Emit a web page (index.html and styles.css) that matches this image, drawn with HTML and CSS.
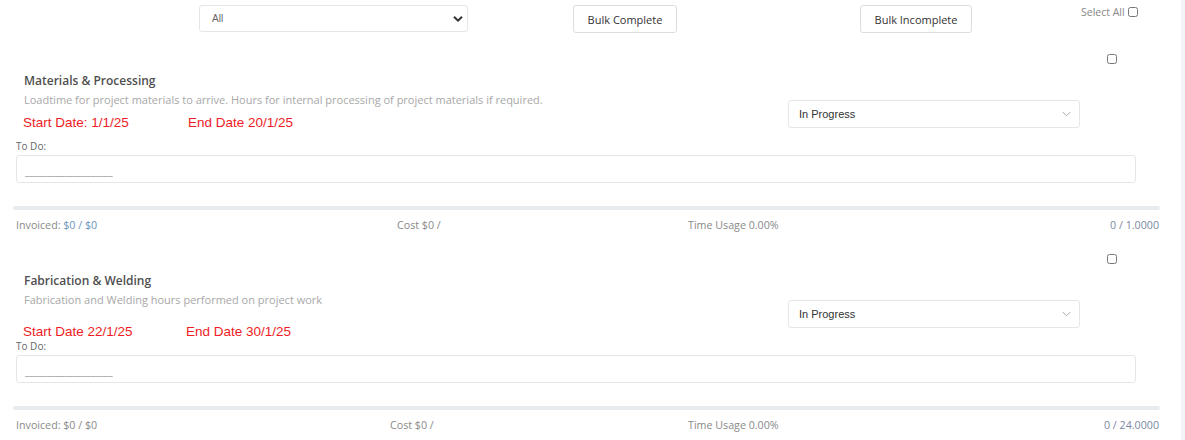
FILE: index.html
```html
<!DOCTYPE html>
<html lang="en">
<head>
    <meta charset="UTF-8">
    <meta name="viewport" content="width=device-width, initial-scale=1.0">
    <title>Project Tasks</title>
    <link rel="stylesheet" href="styles.css">
</head>
<body>

<div class="page">
    <div class="toolbar">
        <div class="select-wrap filter">
            <select class="filter-select">
                <option>All</option>
                <option>Complete</option>
                <option>Incomplete</option>
            </select>
            <svg class="chev chev-bold" width="10" height="7" viewBox="0 0 10 7"><path d="M1 1.2 L5 5.2 L9 1.2" fill="none" stroke="#333" stroke-width="2"/></svg>
        </div>
        <button class="btn btn-complete">Bulk Complete</button>
        <button class="btn btn-incomplete">Bulk Incomplete</button>
        <label class="select-all">Select All <input type="checkbox" class="check"></label>
    </div>

    <div class="task">
        <div class="task-body">
            <div class="check-row"><input type="checkbox" class="check"></div>
            <div class="task-head">
                <div class="task-info">
                    <h3 class="task-title">Materials &amp; Processing</h3>
                    <p class="task-desc">Loadtime for project materials to arrive. Hours for internal processing of project materials if required.</p>
                    <div class="dates">
                        <span class="start">Start Date: 1/1/25</span>
                        <span>End Date 20/1/25</span>
                    </div>
                </div>
                <div class="select-wrap status">
                    <select class="status-select">
                        <option>In Progress</option>
                        <option>Complete</option>
                    </select>
                    <svg class="chev" width="9" height="6" viewBox="0 0 9 6"><path d="M0.5 0.8 L4.5 4.8 L8.5 0.8" fill="none" stroke="#aaa" stroke-width="1"/></svg>
                </div>
            </div>
            <label class="todo-label">To Do:</label>
            <div class="todo-box">____________________</div>
        </div>
        <div class="bar"></div>
        <div class="task-foot">
            <span>Invoiced: <span class="blue">$0 / $0</span></span>
            <span class="cost">Cost $0 /</span>
            <span class="usage">Time Usage 0.00%</span>
            <span class="hours">0 / 1.0000</span>
        </div>
    </div>

    <div class="task">
        <div class="task-body">
            <div class="check-row"><input type="checkbox" class="check"></div>
            <div class="task-head">
                <div class="task-info">
                    <h3 class="task-title">Fabrication &amp; Welding</h3>
                    <p class="task-desc">Fabrication and Welding hours performed on project work</p>
                    <div class="dates dates-low">
                        <span class="start start-narrow">Start Date 22/1/25</span>
                        <span>End Date 30/1/25</span>
                    </div>
                </div>
                <div class="select-wrap status">
                    <select class="status-select">
                        <option>In Progress</option>
                        <option>Complete</option>
                    </select>
                    <svg class="chev" width="9" height="6" viewBox="0 0 9 6"><path d="M0.5 0.8 L4.5 4.8 L8.5 0.8" fill="none" stroke="#aaa" stroke-width="1"/></svg>
                </div>
            </div>
            <label class="todo-label">To Do:</label>
            <div class="todo-box">____________________</div>
        </div>
        <div class="bar"></div>
        <div class="task-foot">
            <span>Invoiced: $0 / $0</span>
            <span class="cost cost-shift">Cost $0 /</span>
            <span class="usage">Time Usage 0.00%</span>
            <span class="hours">0 / 24.0000</span>
        </div>
    </div>
</div>

</body>
</html>
```

FILE: styles.css
```css
body {
    margin: 0;
    background: #fff;
    font-family: "Open Sans", Arial, sans-serif;
    color: #555;
}
.page {
    width: 1181px;
    height: 440px;
    border-right: 4px solid #f3f4f9;
    overflow: hidden;
}
.toolbar {
    display: flex;
    align-items: flex-start;
    height: 45px;
    padding-top: 5px;
    padding-left: 199px;
}
.select-wrap {
    position: relative;
}
.select-wrap select {
    appearance: none;
    -webkit-appearance: none;
    width: 100%;
    background: #fff;
    border: 1px solid #e6e6e6;
    border-radius: 3px;
    font-family: "Liberation Sans", Arial, sans-serif;
    color: #333;
    outline: none;
}
.chev {
    position: absolute;
    top: 50%;
    right: 9px;
    transform: translateY(-50%);
    pointer-events: none;
}
.chev-bold {
    right: 5px;
}
.filter {
    width: 269px;
}
.filter-select {
    height: 27px;
    padding: 0 12px;
    font-size: 10px;
    color: #666 !important;
}
.btn {
    height: 28px;
    background: #fff;
    border: 1px solid #ddd;
    border-radius: 3px;
    font-family: "Open Sans", Arial, sans-serif;
    font-size: 11px;
    color: #333;
    padding: 0;
    cursor: pointer;
}
.btn-complete {
    width: 104px;
    margin-left: 105px;
}
.btn-incomplete {
    width: 112px;
    margin-left: 183px;
}
.select-all {
    display: flex;
    align-items: center;
    margin-left: 109px;
    font-size: 10.5px;
    color: #888;
}
.check {
    width: 10px;
    height: 10px;
    margin: 0 0 0 3px;
}

.task {
    margin-left: 13px;
    width: 1147px;
    margin-bottom: 18px;
}
.task-body {
    margin: 0 24px 0 3px;
}
.check-row {
    display: flex;
    justify-content: flex-end;
    padding-top: 4px;
    padding-right: 19px;
    height: 14px;
}
.task-head {
    display: flex;
    align-items: flex-start;
    margin-top: 5px;
}
.task-info {
    flex: 1;
    padding-left: 8px;
}
.task-title {
    margin: 0;
    font-size: 12px;
    font-weight: 600;
    line-height: 16px;
    color: #4f4f4f;
}
.task-desc {
    margin: 4px 0 0;
    font-size: 11px;
    line-height: 14px;
    color: #a8a8a8;
}
.dates {
    display: flex;
    margin-top: 8px;
    margin-left: -1px;
    font-family: "Liberation Sans", Arial, sans-serif;
    font-size: 13.5px;
    line-height: 16px;
    color: #ee1c25;
}
.dates-low {
    margin-top: 19px;
    margin-bottom: -7px;
    line-height: 12px;
}
.start {
    width: 165px;
}
.start-narrow {
    width: 163px;
}
.status {
    width: 292px;
    margin-top: 27px;
    margin-right: 56px;
}
.status-select {
    height: 28px;
    padding: 0 10px;
    font-size: 11px;
}
.todo-label {
    display: block;
    margin-top: 10px;
    font-size: 10px;
    line-height: 10px;
    color: #666;
}
.todo-box {
    margin-top: 4px;
    height: 26px;
    border: 1px solid #e6e6e6;
    border-radius: 3px;
    padding: 0 8px;
    font-size: 10px;
    line-height: 30px;
    color: #999;
    overflow: hidden;
}
.bar {
    margin-top: 23px;
    height: 4px;
    border-radius: 2px;
    background: #e9ecef;
}
.task-foot {
    display: grid;
    grid-template-columns: 381px 291px 1fr auto;
    margin-top: 8px;
    padding: 0 1px 0 3px;
    font-size: 10.7px;
    line-height: 14px;
    color: #8a8a8a;
}
.cost-shift {
    margin-left: -7px;
}
.blue {
    color: #6a94bb;
}
.hours {
    color: #7b88a3;
}
```
